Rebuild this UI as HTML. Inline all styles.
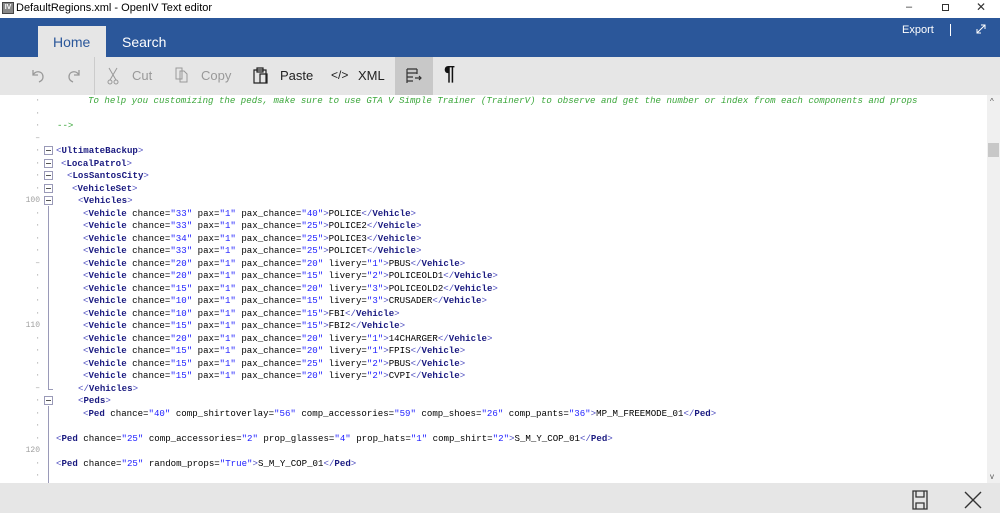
<!DOCTYPE html>
<html><head><meta charset="utf-8"><style>
*{margin:0;padding:0;box-sizing:border-box}
body{width:1000px;height:513px;overflow:hidden;background:#fff;font-family:"Liberation Sans",sans-serif;position:relative}
.abs{position:absolute}
#title{top:0;left:0;width:1000px;height:18px;background:#fff;font-size:11px;color:#000}
#ribbon{top:18px;left:0;width:1000px;height:39px;background:#2b579a}
#tool{top:57px;left:0;width:1000px;height:38px;background:#e6e6e6}
#bottom{top:483px;left:0;width:1000px;height:30px;background:#e6e6e6}
.tb{font-size:13px;color:#222;top:68px}
.dis{color:#999}
.ln{position:absolute;height:12.5px;line-height:12.5px;font-family:"Liberation Mono",monospace;font-size:9.1px;white-space:pre;color:#000}
.b{color:#4b4bbf}.t{color:#1a1a80;font-weight:bold}.v{color:#1e1eff}
.c{color:#3aa63a;font-style:italic}
.g{position:absolute;font-family:"Liberation Mono",monospace;font-size:8px;color:#a0a0a0;height:12.5px;line-height:12.5px;text-align:right;width:36px;left:4px}
.fb{position:absolute;width:9px;height:9px;border:1px solid #9a9ab8;background:#fff;left:44px}
.fb::after{content:"";position:absolute;left:1px;top:3px;width:5px;height:1px;background:#555}
</style></head><body>
<div id="title" class="abs">
 <div class="abs" style="left:2px;top:2px;width:12px;height:12px;background:#888;border:1px solid #444;font-size:7px;color:#fff;text-align:center;line-height:10px;font-weight:bold">IV</div>
 <div class="abs" style="left:16px;top:2px">DefaultRegions.xml - OpenIV Text editor</div>
 <div class="abs" style="left:906px;top:1px;font-size:11px;color:#333">–</div>
 <div class="abs" style="left:942px;top:4px;width:7px;height:7px;border:1px solid #333"></div>
 <div class="abs" style="left:976px;top:0px;font-size:12px;color:#333">✕</div>
</div>
<div id="ribbon" class="abs">
 <div class="abs" style="left:38px;top:8px;width:68px;height:31px;background:#e6e6e6"></div>
 <div class="abs" style="left:53px;top:16px;font-size:14px;color:#2b579a">Home</div>
 <div class="abs" style="left:122px;top:16px;font-size:14px;color:#fff">Search</div>
 <div class="abs" style="left:902px;top:6px;font-size:11px;color:#fff">Export</div>
 <div class="abs" style="left:950px;top:6px;width:1px;height:12px;background:#fff"></div>
 <svg class="abs" style="left:976px;top:6px" width="10" height="10"><path d="M1 9L9 1M5 1H9V5M1 5V9H5" stroke="#fff" fill="none" stroke-width="1"/></svg>
</div>
<div id="tool" class="abs">
 <svg class="abs" style="left:30px;top:10px" width="16" height="16"><path d="M3 3V8H8M3 8C6 3 13 4 13 10C13 13 11 14 9 15" stroke="#999" fill="none" stroke-width="1.3"/></svg>
 <svg class="abs" style="left:66px;top:10px" width="16" height="16"><path d="M13 3V8H8M13 8C10 3 3 4 3 10C3 13 5 14 7 15" stroke="#999" fill="none" stroke-width="1.3"/></svg>
 <div class="abs" style="left:94px;top:0;width:1px;height:38px;background:#ccc"></div>
 <svg class="abs" style="left:106px;top:10px" width="14" height="18"><path d="M3 1L10 13M11 1L4 13" stroke="#999" fill="none"/><circle cx="4" cy="15" r="2" stroke="#999" fill="none"/><circle cx="10" cy="15" r="2" stroke="#999" fill="none"/></svg>
 <div class="abs tb dis" style="left:132px;top:11px">Cut</div>
 <svg class="abs" style="left:174px;top:9px" width="16" height="18"><path d="M2 2H8V13H2Z M6 5H10L13 8V16H6Z" stroke="#999" fill="none"/></svg>
 <div class="abs tb dis" style="left:201px;top:11px">Copy</div>
 <svg class="abs" style="left:252px;top:9px" width="16" height="18"><path d="M2 4H14V17H2Z M5 2H11V6H5Z M8 8H15V17H8Z" stroke="#222" fill="none" stroke-width="1.2"/></svg>
 <div class="abs tb" style="left:280px;top:11px">Paste</div>
 <div class="abs tb" style="left:331px;top:11px;font-size:12px">&lt;/&gt;</div>
 <div class="abs tb" style="left:358px;top:11px">XML</div>
 <div class="abs" style="left:395px;top:0;width:38px;height:38px;background:#c8c8c8"></div>
 <svg class="abs" style="left:405px;top:10px" width="18" height="18"><path d="M2 2H12M2 6H12M2 10H8M2 14H8M2 2V16M12 2V7M10 11H16M14 9L16 11L14 13" stroke="#333" fill="none" stroke-width="1.2"/></svg>
 <div class="abs" style="left:444px;top:6px;font-size:20px;color:#111;font-weight:bold">¶</div>
</div>
<div class="abs" style="left:987px;top:95px;width:13px;height:388px;background:#f0f0f0"></div>
<div class="abs" style="left:990px;top:97px;font-size:8px;color:#555">^</div>
<div class="abs" style="left:988px;top:143px;width:11px;height:14px;background:#c8c8c8"></div>
<div class="abs" style="left:990px;top:472px;font-size:8px;color:#555">v</div>

<!-- gutter -->
<div class="g" style="top:95px">·</div><div class="g" style="top:107.5px">·</div><div class="g" style="top:120px">·</div><div class="g" style="top:132.5px">–</div>
<div class="g" style="top:145px">·</div><div class="g" style="top:157.5px">·</div><div class="g" style="top:170px">·</div><div class="g" style="top:182.5px">·</div>
<div class="g" style="top:195px">100</div><div class="g" style="top:207.5px">·</div><div class="g" style="top:220px">·</div><div class="g" style="top:232.5px">·</div>
<div class="g" style="top:245px">·</div><div class="g" style="top:257.5px">–</div><div class="g" style="top:270px">·</div><div class="g" style="top:282.5px">·</div>
<div class="g" style="top:295px">·</div><div class="g" style="top:307.5px">·</div><div class="g" style="top:320px">110</div><div class="g" style="top:332.5px">·</div>
<div class="g" style="top:345px">·</div><div class="g" style="top:357.5px">·</div><div class="g" style="top:370px">·</div><div class="g" style="top:382.5px">–</div>
<div class="g" style="top:395px">·</div><div class="g" style="top:407.5px">·</div><div class="g" style="top:420px">·</div><div class="g" style="top:432.5px">·</div>
<div class="g" style="top:445px">120</div><div class="g" style="top:457.5px">·</div><div class="g" style="top:470px">·</div>
<div class="fb" style="top:146px"></div><div class="fb" style="top:158.5px"></div><div class="fb" style="top:171px"></div><div class="fb" style="top:183.5px"></div><div class="fb" style="top:196px"></div><div class="fb" style="top:396px"></div>
<div class="abs" style="left:48px;top:206px;width:1px;height:183px;background:#9a9ab8"></div>
<div class="abs" style="left:48px;top:389px;width:5px;height:1px;background:#9a9ab8"></div>
<div class="abs" style="left:48px;top:406px;width:1px;height:77px;background:#9a9ab8"></div>

<!-- code -->
<div class="ln c" style="top:95px;left:88px">To help you customizing the peds, make sure to use GTA V Simple Trainer (TrainerV) to observe and get the number or index from each components and props</div>
<div class="ln c" style="top:120px;left:57px">--&gt;</div>
<div class="ln" style="top:145px;left:56px"><span class="b">&lt;</span><span class="t">UltimateBackup</span><span class="b">&gt;</span></div>
<div class="ln" style="top:157.5px;left:61px"><span class="b">&lt;</span><span class="t">LocalPatrol</span><span class="b">&gt;</span></div>
<div class="ln" style="top:170px;left:67px"><span class="b">&lt;</span><span class="t">LosSantosCity</span><span class="b">&gt;</span></div>
<div class="ln" style="top:182.5px;left:72px"><span class="b">&lt;</span><span class="t">VehicleSet</span><span class="b">&gt;</span></div>
<div class="ln" style="top:195px;left:78px"><span class="b">&lt;</span><span class="t">Vehicles</span><span class="b">&gt;</span></div>
<div class="ln" style="top:207.5px;left:83px"><span class="b">&lt;</span><span class="t">Vehicle</span> chance=<span class="v">"33"</span> pax=<span class="v">"1"</span> pax_chance=<span class="v">"40"</span><span class="b">&gt;</span>POLICE<span class="b">&lt;/</span><span class="t">Vehicle</span><span class="b">&gt;</span></div>
<div class="ln" style="top:220px;left:83px"><span class="b">&lt;</span><span class="t">Vehicle</span> chance=<span class="v">"33"</span> pax=<span class="v">"1"</span> pax_chance=<span class="v">"25"</span><span class="b">&gt;</span>POLICE2<span class="b">&lt;/</span><span class="t">Vehicle</span><span class="b">&gt;</span></div>
<div class="ln" style="top:232.5px;left:83px"><span class="b">&lt;</span><span class="t">Vehicle</span> chance=<span class="v">"34"</span> pax=<span class="v">"1"</span> pax_chance=<span class="v">"25"</span><span class="b">&gt;</span>POLICE3<span class="b">&lt;/</span><span class="t">Vehicle</span><span class="b">&gt;</span></div>
<div class="ln" style="top:245px;left:83px"><span class="b">&lt;</span><span class="t">Vehicle</span> chance=<span class="v">"33"</span> pax=<span class="v">"1"</span> pax_chance=<span class="v">"25"</span><span class="b">&gt;</span>POLICET<span class="b">&lt;/</span><span class="t">Vehicle</span><span class="b">&gt;</span></div>
<div class="ln" style="top:257.5px;left:83px"><span class="b">&lt;</span><span class="t">Vehicle</span> chance=<span class="v">"20"</span> pax=<span class="v">"1"</span> pax_chance=<span class="v">"20"</span> livery=<span class="v">"1"</span><span class="b">&gt;</span>PBUS<span class="b">&lt;/</span><span class="t">Vehicle</span><span class="b">&gt;</span></div>
<div class="ln" style="top:270px;left:83px"><span class="b">&lt;</span><span class="t">Vehicle</span> chance=<span class="v">"20"</span> pax=<span class="v">"1"</span> pax_chance=<span class="v">"15"</span> livery=<span class="v">"2"</span><span class="b">&gt;</span>POLICEOLD1<span class="b">&lt;/</span><span class="t">Vehicle</span><span class="b">&gt;</span></div>
<div class="ln" style="top:282.5px;left:83px"><span class="b">&lt;</span><span class="t">Vehicle</span> chance=<span class="v">"15"</span> pax=<span class="v">"1"</span> pax_chance=<span class="v">"20"</span> livery=<span class="v">"3"</span><span class="b">&gt;</span>POLICEOLD2<span class="b">&lt;/</span><span class="t">Vehicle</span><span class="b">&gt;</span></div>
<div class="ln" style="top:295px;left:83px"><span class="b">&lt;</span><span class="t">Vehicle</span> chance=<span class="v">"10"</span> pax=<span class="v">"1"</span> pax_chance=<span class="v">"15"</span> livery=<span class="v">"3"</span><span class="b">&gt;</span>CRUSADER<span class="b">&lt;/</span><span class="t">Vehicle</span><span class="b">&gt;</span></div>
<div class="ln" style="top:307.5px;left:83px"><span class="b">&lt;</span><span class="t">Vehicle</span> chance=<span class="v">"10"</span> pax=<span class="v">"1"</span> pax_chance=<span class="v">"15"</span><span class="b">&gt;</span>FBI<span class="b">&lt;/</span><span class="t">Vehicle</span><span class="b">&gt;</span></div>
<div class="ln" style="top:320px;left:83px"><span class="b">&lt;</span><span class="t">Vehicle</span> chance=<span class="v">"15"</span> pax=<span class="v">"1"</span> pax_chance=<span class="v">"15"</span><span class="b">&gt;</span>FBI2<span class="b">&lt;/</span><span class="t">Vehicle</span><span class="b">&gt;</span></div>
<div class="ln" style="top:332.5px;left:83px"><span class="b">&lt;</span><span class="t">Vehicle</span> chance=<span class="v">"20"</span> pax=<span class="v">"1"</span> pax_chance=<span class="v">"20"</span> livery=<span class="v">"1"</span><span class="b">&gt;</span>14CHARGER<span class="b">&lt;/</span><span class="t">Vehicle</span><span class="b">&gt;</span></div>
<div class="ln" style="top:345px;left:83px"><span class="b">&lt;</span><span class="t">Vehicle</span> chance=<span class="v">"15"</span> pax=<span class="v">"1"</span> pax_chance=<span class="v">"20"</span> livery=<span class="v">"1"</span><span class="b">&gt;</span>FPIS<span class="b">&lt;/</span><span class="t">Vehicle</span><span class="b">&gt;</span></div>
<div class="ln" style="top:357.5px;left:83px"><span class="b">&lt;</span><span class="t">Vehicle</span> chance=<span class="v">"15"</span> pax=<span class="v">"1"</span> pax_chance=<span class="v">"25"</span> livery=<span class="v">"2"</span><span class="b">&gt;</span>PBUS<span class="b">&lt;/</span><span class="t">Vehicle</span><span class="b">&gt;</span></div>
<div class="ln" style="top:370px;left:83px"><span class="b">&lt;</span><span class="t">Vehicle</span> chance=<span class="v">"15"</span> pax=<span class="v">"1"</span> pax_chance=<span class="v">"20"</span> livery=<span class="v">"2"</span><span class="b">&gt;</span>CVPI<span class="b">&lt;/</span><span class="t">Vehicle</span><span class="b">&gt;</span></div>
<div class="ln" style="top:382.5px;left:78px"><span class="b">&lt;/</span><span class="t">Vehicles</span><span class="b">&gt;</span></div>
<div class="ln" style="top:395px;left:78px"><span class="b">&lt;</span><span class="t">Peds</span><span class="b">&gt;</span></div>
<div class="ln" style="top:407.5px;left:83px"><span class="b">&lt;</span><span class="t">Ped</span> chance=<span class="v">"40"</span> comp_shirtoverlay=<span class="v">"56"</span> comp_accessories=<span class="v">"59"</span> comp_shoes=<span class="v">"26"</span> comp_pants=<span class="v">"36"</span><span class="b">&gt;</span>MP_M_FREEMODE_01<span class="b">&lt;/</span><span class="t">Ped</span><span class="b">&gt;</span></div>
<div class="ln" style="top:432.5px;left:56px"><span class="b">&lt;</span><span class="t">Ped</span> chance=<span class="v">"25"</span> comp_accessories=<span class="v">"2"</span> prop_glasses=<span class="v">"4"</span> prop_hats=<span class="v">"1"</span> comp_shirt=<span class="v">"2"</span><span class="b">&gt;</span>S_M_Y_COP_01<span class="b">&lt;/</span><span class="t">Ped</span><span class="b">&gt;</span></div>
<div class="ln" style="top:457.5px;left:56px"><span class="b">&lt;</span><span class="t">Ped</span> chance=<span class="v">"25"</span> random_props=<span class="v">"True"</span><span class="b">&gt;</span>S_M_Y_COP_01<span class="b">&lt;/</span><span class="t">Ped</span><span class="b">&gt;</span></div>

<div id="bottom" class="abs">
 <svg class="abs" style="left:911px;top:7px" width="18" height="20"><path d="M2 1H16V19H2Z M5 1V7H13V1 M5 19V13H13V19" stroke="#333" fill="none" stroke-width="1.3"/></svg>
 <svg class="abs" style="left:964px;top:8px" width="18" height="18"><path d="M1 1L17 17M17 1L1 17" stroke="#333" fill="none" stroke-width="1.4"/></svg>
</div>
</body></html>
